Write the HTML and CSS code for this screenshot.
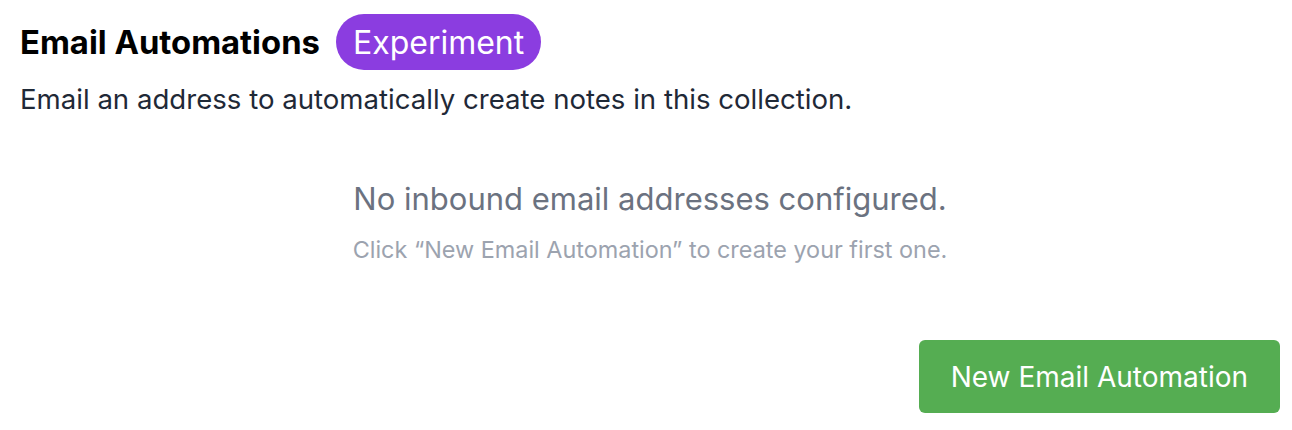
FILE: index.html
```html
<!DOCTYPE html>
<html>
<head>
    <title>Email Automations</title>
    <link rel="stylesheet" href="styles.css">
</head>
<body>
    <div class="automations">
        <div class="header">
            <h2 class="title">Email Automations</h2>
            <span class="badge">Experiment</span>
        </div>
        <p class="description">Email an address to automatically create notes in this collection.</p>

        <div class="empty-state">
            <div class="empty-title">No inbound email addresses configured.</div>
            <div class="empty-hint">Click &ldquo;New Email Automation&rdquo; to create your first one.</div>
        </div>

        <div class="actions">
            <button class="new-button">New Email Automation</button>
        </div>
    </div>
</body>
</html>
```

FILE: styles.css
```css
body {
    margin: 0;
    background: #fff;
    font-family: Inter, "Open Sans", sans-serif;
}

.automations {
    padding: 14px 12px 0 20px;
}

.header {
    display: flex;
    align-items: center;
    gap: 16px;
}

.title {
    margin: 0;
    font-size: 32.8px;
    font-weight: 700;
    color: #000;
}

.badge {
    display: inline-flex;
    align-items: center;
    height: 56px;
    padding: 0 17px;
    border-radius: 28px;
    background: #8b3de0;
    color: #fff;
    font-size: 32px;
}

.description {
    margin: 11px 0 0;
    font-size: 27.6px;
    line-height: 36px;
    color: #1f2937;
}

.empty-state {
    margin-top: 62px;
    text-align: center;
}

.empty-title {
    font-size: 31px;
    line-height: 40px;
    color: #6b7280;
}

.empty-hint {
    margin-top: 15px;
    font-size: 23.4px;
    line-height: 32px;
    color: #9ca3af;
}

.actions {
    display: flex;
    justify-content: flex-end;
    margin-top: 74px;
}

.new-button {
    height: 73px;
    padding: 0 32px;
    border: none;
    border-radius: 6px;
    background: #55ad52;
    color: #fff;
    font-family: inherit;
    font-size: 28px;
    cursor: pointer;
}
```
